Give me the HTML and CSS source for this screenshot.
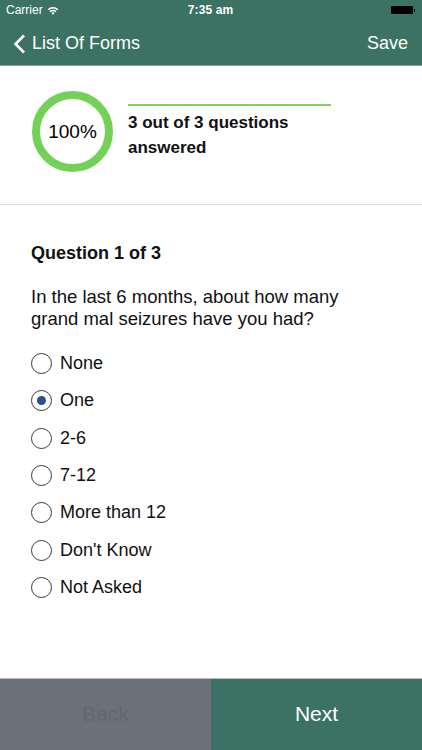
FILE: index.html
```html
<!DOCTYPE html>
<html>
<head>
<meta charset="utf-8">
<link rel="stylesheet" href="styles.css">
</head>
<body>
<div class="app">
  <header class="header">
    <div class="status">
      <div class="status-left">
        <span>Carrier</span>
        <svg class="wifi" width="12" height="9" viewBox="0 0 12 9">
          <path d="M0.6 3.2 A7.8 7.8 0 0 1 11.4 3.2 L10.3 4.3 A6.3 6.3 0 0 0 1.7 4.3 Z" fill="#fff"/>
          <path d="M2.5 5.1 A5.1 5.1 0 0 1 9.5 5.1 L8.4 6.2 A3.6 3.6 0 0 0 3.6 6.2 Z" fill="#fff"/>
          <path d="M4.4 7 A2.4 2.4 0 0 1 7.6 7 L6 8.7 Z" fill="#fff"/>
        </svg>
      </div>
      <div class="status-time">7:35 am</div>
      <div class="status-right">
        <span class="battery"></span><span class="battery-nub"></span>
      </div>
    </div>
    <nav class="nav">
      <div class="nav-back">
        <svg width="13" height="20" viewBox="0 0 13 20"><path d="M11 1.5 L2.5 10 L11 18.5" fill="none" stroke="#fff" stroke-width="2.6" stroke-linecap="butt" stroke-linejoin="miter"/></svg>
        <span>List Of Forms</span>
      </div>
      <div class="nav-save">Save</div>
    </nav>
  </header>

  <main class="main">
    <section class="progress">
      <div class="ring"><span>100%</span></div>
      <div class="progress-info">
        <div class="bar"></div>
        <div class="progress-text">3 out of 3 questions<br>answered</div>
      </div>
    </section>

    <section class="question">
      <h2 class="q-title">Question 1 of 3</h2>
      <p class="q-text">In the last 6 months, about how many grand mal seizures have you had?</p>
      <ul class="options">
        <li class="option"><span class="radio"></span>None</li>
        <li class="option"><span class="radio checked"></span>One</li>
        <li class="option"><span class="radio"></span>2-6</li>
        <li class="option"><span class="radio"></span>7-12</li>
        <li class="option"><span class="radio"></span>More than 12</li>
        <li class="option"><span class="radio"></span>Don't Know</li>
        <li class="option"><span class="radio"></span>Not Asked</li>
      </ul>
    </section>
  </main>

  <footer class="footer">
    <div class="btn btn-back">Back</div>
    <div class="btn btn-next">Next</div>
  </footer>
</div>
</body>
</html>
```

FILE: styles.css
```css
* { box-sizing: border-box; }
html, body { margin: 0; padding: 0; }
body {
  width: 422px;
  height: 750px;
  overflow: hidden;
  background: #fff;
  font-family: "Liberation Sans", Arial, sans-serif;
  color: #000;
}
.app {
  display: flex;
  flex-direction: column;
  height: 750px;
}
.header {
  background: #3b7264;
  color: #fff;
  border-bottom: 1px solid #8aa39a;
}
.status {
  height: 20px;
  display: flex;
  align-items: center;
  justify-content: space-between;
  padding: 0 7px 0 6px;
  font-size: 12px;
}
.status-left { display: flex; align-items: center; gap: 4px; width: 100px; }
.status-time { font-weight: bold; font-size: 12px; letter-spacing: 0.1px; }
.status-right { width: 100px; display: flex; justify-content: flex-end; align-items: center; }
.battery {
  width: 22px; height: 8px; background: #000; border-radius: 1px; display: block;
}
.battery-nub { width: 1.5px; height: 3px; background: #000; display: block; margin-left: 1px; }
.nav {
  height: 45px;
  display: flex;
  align-items: center;
  justify-content: space-between;
  padding: 2px 14px 0 13px;
  font-size: 18px;
}
.nav-back { display: flex; align-items: center; gap: 6px; }
.nav-back svg { display: block; }
.main { flex: 1; }
.progress {
  height: 139px;
  border-bottom: 1px solid #dcdcdc;
  display: flex;
  align-items: flex-start;
  padding: 25px 0 0 32px;
}
.ring {
  width: 81px;
  height: 81px;
  border-radius: 50%;
  border: 8px solid #74d158;
  display: flex;
  align-items: center;
  justify-content: center;
  font-size: 19px;
  flex: none;
}
.progress-info {
  margin-left: 15px;
  margin-top: 13px;
}
.bar {
  width: 203px;
  height: 2px;
  background: #7fd45f;
}
.progress-text {
  margin-top: 4px;
  font-size: 17px;
  line-height: 25px;
  font-weight: bold;
  color: #111;
}
.question { padding: 37px 20px 0 31px; }
.q-title {
  margin: 0;
  font-size: 18px;
  line-height: 22px;
  font-weight: bold;
  color: #111;
}
.q-text {
  margin: 22px 0 0;
  font-size: 18.5px;
  line-height: 22px;
  width: 340px;
  color: #111;
}
.options {
  list-style: none;
  margin: 15px 0 0;
  padding: 0;
}
.option {
  height: 37.33px;
  display: flex;
  align-items: center;
  font-size: 18px;
  color: #111;
}
.radio {
  width: 21px;
  height: 21px;
  border-radius: 50%;
  border: 1px solid #3a3a3a;
  margin-right: 8px;
  display: flex;
  align-items: center;
  justify-content: center;
  flex: none;
}
.radio.checked::after {
  content: "";
  width: 9px;
  height: 9px;
  border-radius: 50%;
  background: #2d4f8f;
}
.footer {
  height: 72px;
  display: flex;
  border-top: 1px solid #b9bdbd;
}
.btn {
  display: flex;
  align-items: center;
  justify-content: center;
  font-size: 21px;
  padding-bottom: 1px;
}
.btn-back {
  width: 211px;
  background: #6c7079;
  color: #65686f;
}
.btn-next {
  flex: 1;
  background: #3b7264;
  color: #fff;
}
```
